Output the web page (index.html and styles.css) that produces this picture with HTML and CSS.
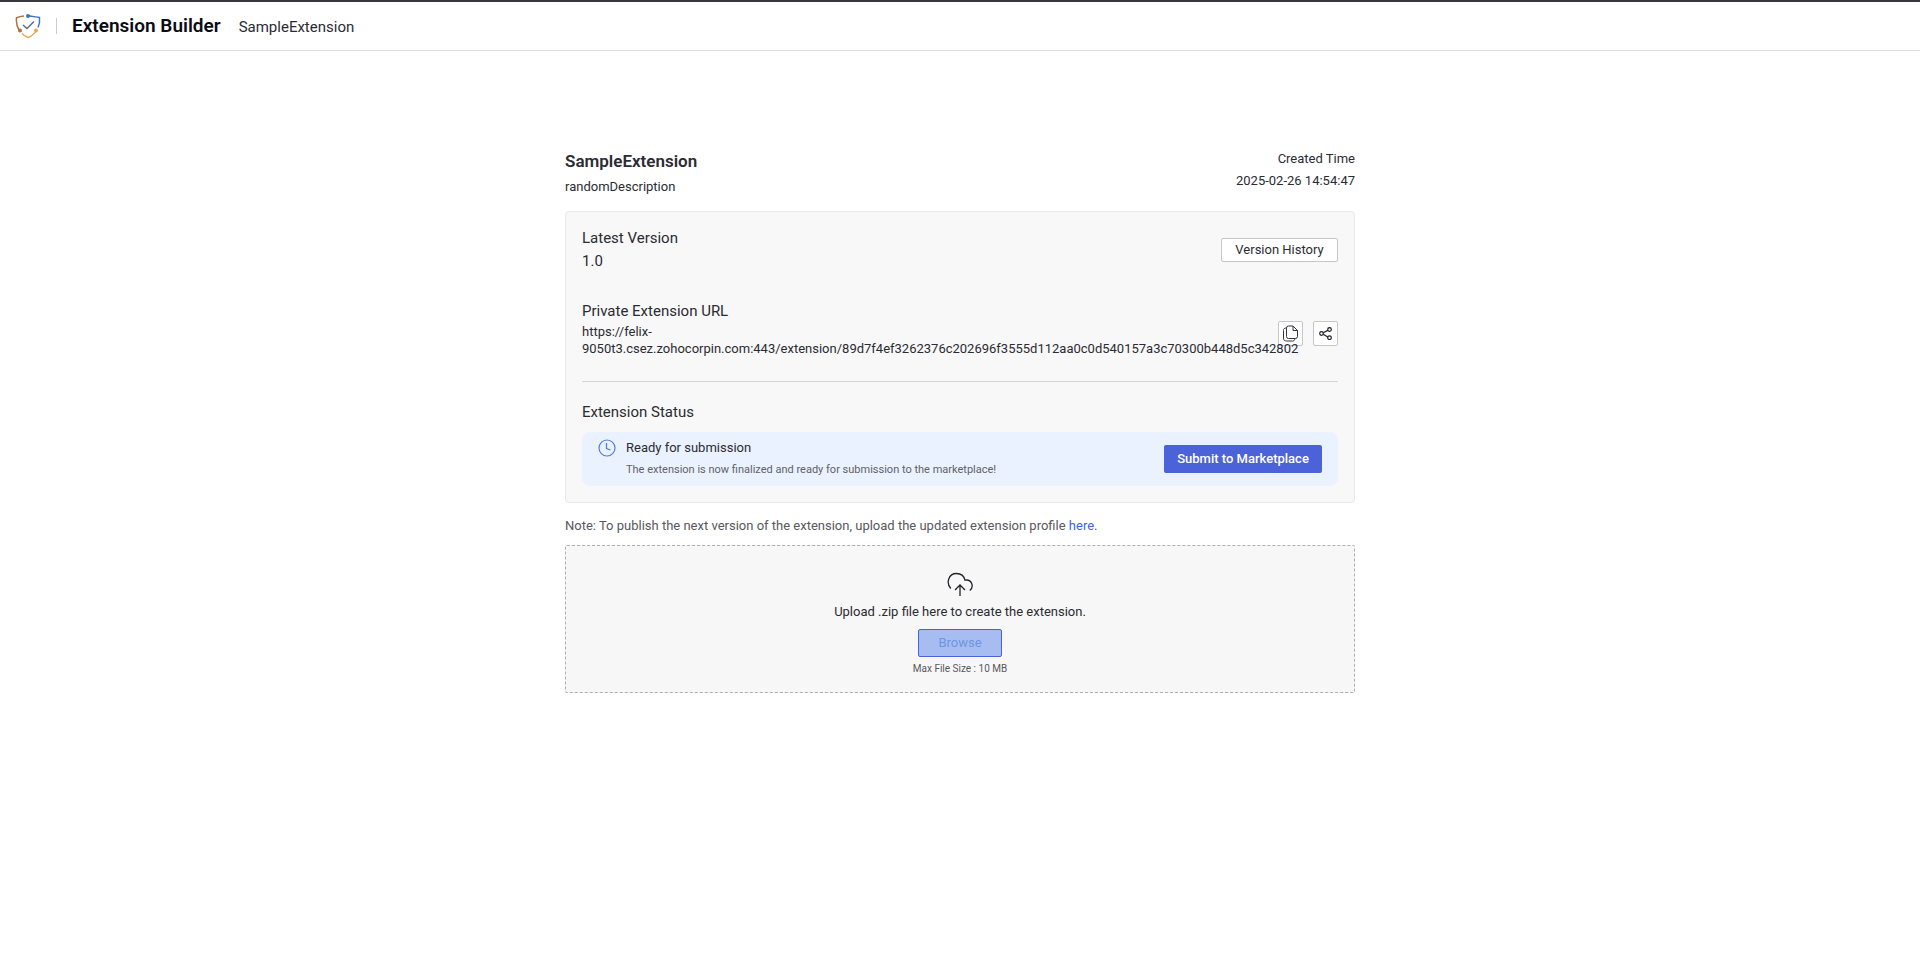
FILE: index.html
```html
<!DOCTYPE html>
<html lang="en">
<head>
  <meta charset="UTF-8">
  <meta name="viewport" content="width=device-width, initial-scale=1">
  <title>Extension Builder</title>
  <link rel="stylesheet" href="styles.css">
</head>
<body>

  <header class="topbar">
    <svg class="logo" viewBox="0 0 26 26" fill="none" stroke-width="1.5" aria-hidden="true">
      <path d="M9 3C6.500 3.200 4 3.700 1.500 4.800C1 9.500 1.800 13.500 4 17" stroke="#b4703f"/>
      <path d="M13 2.500C17 3.500 20.500 3.800 24.500 4.500C25 9 24.500 11.500 23 14.500" stroke="#3f73c4"/>
      <path d="M7 20.500C9 22.500 11 23.700 13 24.700C16.500 23 19.500 21 21.500 17.500" stroke="#e3a953"/>
      <path d="M8 12L12 15.500L19 8.500" stroke="#5b6b8c"/>
      <circle cx="13" cy="3" r="2" fill="#3f73c4"/>
      <circle cx="5" cy="17.500" r="2" fill="#b4703f"/>
      <circle cx="21" cy="17.500" r="2" fill="#e3a953"/>
    </svg>
    <span class="separator"></span>
    <div class="titles">
      <h1>Extension Builder</h1>
      <span class="extension-name">SampleExtension</span>
    </div>
  </header>

  <main class="content">
    <section class="intro">
      <div>
        <h2>SampleExtension</h2>
        <p>randomDescription</p>
      </div>
      <div class="created">
        <p>Created Time</p>
        <p>2025-02-26 14:54:47</p>
      </div>
    </section>

    <section class="card">
      <div class="row version">
        <div>
          <h3>Latest Version</h3>
          <p class="version-number">1.0</p>
        </div>
        <button type="button" class="btn-outline">Version History</button>
      </div>

      <div class="row url-row">
        <div class="url-info">
          <h3>Private Extension URL</h3>
          <p class="url">https://felix-9050t3.csez.zohocorpin.com:443/extension/89d7f4ef3262376c202696f3555d112aa0c0d540157a3c70300b448d5c342802</p>
        </div>
        <div class="url-actions">
          <button type="button" class="btn-icon" aria-label="Copy URL">
            <svg width="17" height="17" viewBox="0 0 17 17" fill="none" stroke="#34343c" stroke-linejoin="round" aria-hidden="true">
              <path d="M6.500 1H11L15.500 5.500V11.500A2 2 0 0 1 13.500 13.500H6.500A2 2 0 0 1 4.500 11.500V3A2 2 0 0 1 6.500 1Z"/>
              <path d="M11 1V5.500H15.500"/>
              <path d="M4.500 3C2.500 3 1.500 3.500 1.500 5.500V13C1.500 15 2.500 16 4.500 16H10.500C12 16 12.500 15.500 13 13.500"/>
            </svg>
          </button>
          <button type="button" class="btn-icon" aria-label="Share URL">
            <svg width="13" height="13" viewBox="0 0 13 13" fill="none" stroke="#1c1c28" stroke-width="1.200" aria-hidden="true">
              <circle cx="2.500" cy="6.500" r="1.800"/>
              <circle cx="10.500" cy="2.500" r="1.800"/>
              <circle cx="10.500" cy="10.700" r="1.800"/>
              <path d="M4.200 5.700L8.800 3.400M4.200 7.300L8.800 9.900"/>
            </svg>
          </button>
        </div>
      </div>

      <h3 class="status-title">Extension Status</h3>
      <div class="status">
        <svg class="clock" width="18" height="18" viewBox="0 0 18 18" fill="none" stroke="#4f7be8" aria-hidden="true">
          <circle cx="9" cy="9" r="8" stroke-width="1.200"/>
          <path d="M8.500 4V9.500L12.500 11" stroke-width="1.300"/>
        </svg>
        <div class="status-text">
          <p class="status-name">Ready for submission</p>
          <p class="status-info">The extension is now finalized and ready for submission to the marketplace!</p>
        </div>
        <button type="button" class="btn-primary">Submit to Marketplace</button>
      </div>
    </section>

    <p class="note">Note: To publish the next version of the extension, upload the updated extension profile <a href="#">here</a>.</p>

    <section class="upload">
      <svg width="28" height="24" viewBox="0 0 28 24" fill="none" stroke="#22222c" stroke-width="1.300" aria-hidden="true">
        <path d="M4.800 16.500C-.2 11 2.500 1.500 10.500 1.500C14.500 1.500 18 4 19 8.200C25.500 6.800 28.500 14.500 23.800 18.500"/>
        <path d="M14 24V13M9 18L14 13L19 18"/>
      </svg>
      <p class="upload-text">Upload .zip file here to create the extension.</p>
      <button type="button" class="btn-browse" disabled>Browse</button>
      <p class="upload-size">Max File Size : 10 MB</p>
    </section>
  </main>

</body>
</html>
```
FILE: styles.css
```css
* {
  margin: 0;
  padding: 0;
  box-sizing: border-box;
}

body {
  font-family: Roboto, "Liberation Sans", sans-serif;
  font-size: 13px;
  line-height: 17px;
  color: #2b2b33;
  background: #fff;
  border-top: 2px solid #3a383e;
}

button {
  font-family: inherit;
  font-size: 13px;
  cursor: pointer;
}

.topbar {
  display: flex;
  align-items: center;
  height: 49px;
  padding: 0 15px;
  border-bottom: 1px solid #e0e0e2;
}

.logo {
  width: 26px;
  height: 26px;
}

.separator {
  width: 1px;
  height: 16px;
  margin: 0 15px;
  background: #ccc;
}

.titles {
  display: flex;
  align-items: baseline;
}

.topbar h1 {
  font-size: 19px;
  font-weight: 600;
  line-height: 24px;
  color: #0b0b14;
}

.extension-name {
  margin-left: 18px;
  font-size: 15px;
}

.content {
  width: 100%;
  max-width: 790px;
  margin: 0 auto;
  padding-top: 97px;
}

.intro {
  display: flex;
  justify-content: space-between;
  height: 63px;
}

.intro h2 {
  font-size: 17px;
  font-weight: 600;
  line-height: 22px;
  margin: 2px 0 6px;
}

.created {
  text-align: right;
}

.created p {
  line-height: 22px;
}

.card {
  padding: 16px;
  background: #f8f8f8;
  border: 1px solid #e9e9e9;
  border-radius: 4px;
}

h3 {
  font-size: 15px;
  font-weight: 400;
  line-height: 20px;
}

.row {
  display: flex;
  justify-content: space-between;
  align-items: flex-start;
}

.version {
  margin-bottom: 27px;
}

.version-number {
  font-size: 15px;
  line-height: 26px;
}

.btn-outline {
  width: 117px;
  height: 24px;
  margin-top: 10px;
  padding-bottom: 2px;
  color: #2b2b33;
  background: #fff;
  border: 1px solid #c6c6c8;
  border-radius: 2px;
}

.url-row {
  padding-bottom: 24px;
  margin-bottom: 20px;
  border-bottom: 1px solid #d6d6d8;
}

/* long urls run on over the action buttons */
.url-info {
  flex: 1;
  min-width: 0;
  z-index: 1;
}

.url {
  margin-top: 2px;
}

.url-actions {
  display: flex;
  gap: 10px;
  margin-top: 20px;
}

.btn-icon {
  display: flex;
  align-items: center;
  justify-content: center;
  width: 25px;
  height: 25px;
  background: #fff;
  border: 1px solid #c6c6c8;
  border-radius: 2px;
}

.status-title {
  margin-bottom: 10px;
}

.status {
  display: flex;
  align-items: flex-start;
  padding: 6px 16px 4px;
  background: #ebf2ff;
  border-radius: 8px;
}

.clock {
  margin-top: 1px;
}

.status-text {
  flex: 1;
  margin-left: 10px;
}

.status-name {
  line-height: 20px;
}

.status-info {
  font-size: 11px;
  line-height: 24px;
  color: #616166;
}

.btn-primary {
  width: 158px;
  height: 28px;
  margin-top: 7px;
  padding-bottom: 1px;
  font-weight: 500;
  color: #fff;
  background: #4c62d9;
  border: none;
  border-radius: 2px;
}

.note {
  margin: 14px 0 11px;
  color: #58585e;
}

.note a {
  color: #4263eb;
  text-decoration: none;
}

.upload {
  display: flex;
  flex-direction: column;
  align-items: center;
  padding: 26px 0 15px;
  background: #f7f7f7;
  border: 1px dashed #b0b0b2;
  border-radius: 2px;
}

.upload-text {
  margin: 7px 0 9px;
}

.btn-browse {
  width: 84px;
  height: 28px;
  padding-bottom: 1px;
  color: #6c96df;
  background: #a7bdf2;
  border: 1px solid #4c62d9;
  border-radius: 2px;
  cursor: default;
}

.upload-size {
  margin-top: 3px;
  font-size: 10px;
  color: #58585e;
}
```
